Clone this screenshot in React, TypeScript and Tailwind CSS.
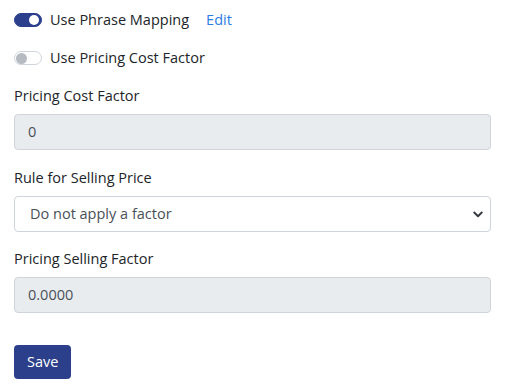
function Toggle({ on }: { on: boolean }) {
  return (
    <span
      className={
        on
          ? "flex h-[14px] w-[28px] shrink-0 items-center justify-end rounded-full border border-[#2b3f8c] bg-[#2b3f8c] px-[2px]"
          : "flex h-[14px] w-[28px] shrink-0 items-center justify-start rounded-full border border-[#ced4da] bg-white px-[1px]"
      }
    >
      <span
        className={
          on
            ? "h-[10px] w-[10px] rounded-full bg-white"
            : "h-[11px] w-[11px] rounded-full bg-[#b5bbc1]"
        }
      />
    </span>
  );
}

export default function App() {
  return (
    <div className="bg-white pl-[14px] pt-[9px] font-['Open_Sans',sans-serif] text-[14.5px] text-[#212529]">
      <div className="flex h-[22px] items-center">
        <Toggle on />
        <span className="ml-[8px] leading-[22px]">Use Phrase Mapping</span>
        <a href="#" className="ml-[17px] leading-[22px] text-[#2c7be5]">
          Edit
        </a>
      </div>

      <div className="mt-[16px] flex h-[22px] items-center">
        <Toggle on={false} />
        <span className="ml-[8px] leading-[22px]">Use Pricing Cost Factor</span>
      </div>

      <div className="w-[477px]">
        <label className="mt-[16px] block leading-[22px]">Pricing Cost Factor</label>
        <div className="mt-[7px] flex h-[36px] items-center rounded-[4px] border border-[#ced4da] bg-[#e9ecef] px-[13px] text-[#495057]">
          0
        </div>

        <label className="mt-[17px] block leading-[22px]">Rule for Selling Price</label>
        <div className="mt-[7px] flex h-[36px] items-center justify-between rounded-[4px] border border-[#ced4da] bg-white pl-[15px] pr-[6px] text-[#495057]">
          <span>Do not apply a factor</span>
          <svg width="12" height="12" viewBox="0 0 16 16" fill="none" stroke="#343a40" strokeWidth="2.5" strokeLinecap="round" strokeLinejoin="round">
            <path d="M3 6l5 5 5-5" />
          </svg>
        </div>

        <label className="mt-[16px] block leading-[22px]">Pricing Selling Factor</label>
        <div className="mt-[7px] flex h-[36px] items-center rounded-[4px] border border-[#ced4da] bg-[#e9ecef] px-[13px] text-[#495057]">
          0.0000
        </div>

        <button className="mt-[32px] h-[34px] rounded-[4px] bg-[#2b3f8a] px-[13px] text-white">
          Save
        </button>
      </div>
    </div>
  );
}
